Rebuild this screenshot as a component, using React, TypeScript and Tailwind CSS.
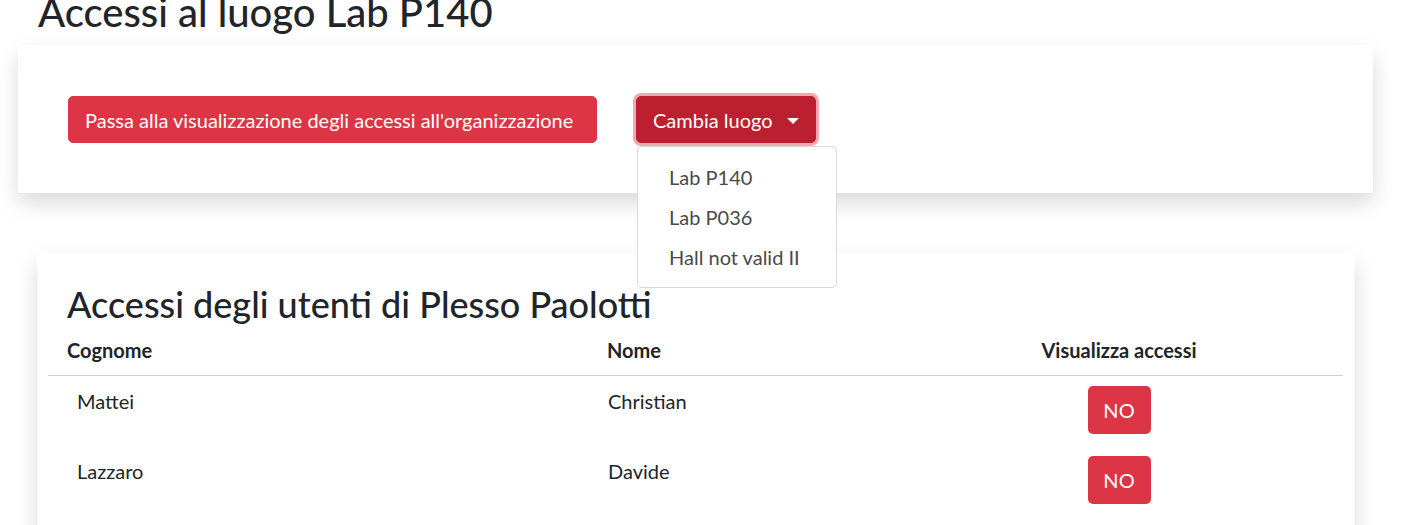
import React, { useState } from 'react';

type Utente = {
  id: number;
  cognome: string;
  nome: string;
};

const luoghi = ['Lab P140', 'Lab P036', 'Hall not valid II'];

const utenti: Utente[] = [
  { id: 1, cognome: 'Mattei', nome: 'Christian' },
  { id: 2, cognome: 'Lazzaro', nome: 'Davide' },
];

export default function App() {
  const [menuOpen, setMenuOpen] = useState(true);

  return (
    <div className="min-h-screen overflow-hidden bg-white font-['Lato','Liberation_Sans',sans-serif] text-[#212529]">
      <h1 className="ml-[38px] -mt-[12px] mb-[9px] text-[40px] leading-[48px] font-medium">
        Accessi al luogo Lab P140
      </h1>

      <div className="ml-[18px] w-[1355px] bg-white px-[50px] pt-[51px] pb-[50px] shadow-[0_10px_20px_rgba(0,0,0,0.15)]">
        <div className="flex items-start gap-[39px]">
          <button className="h-[47px] w-[529px] rounded-[5px] border border-[#dc3545] bg-[#dc3545] px-[16px] text-left text-[20px] leading-[30px] text-white">
            Passa alla visualizzazione degli accessi all'organizzazione
          </button>

          <div className="relative">
            <button
              onClick={() => setMenuOpen(!menuOpen)}
              className="flex h-[47px] w-[180px] items-center rounded-[5px] border border-[#b81f2f] bg-[#bb1f30] px-[16px] text-[20px] leading-[30px] text-white shadow-[0_0_0_3px_rgba(225,83,97,0.5)]"
            >
              Cambia luogo
              <span className="ml-[14px] mt-[2px] h-0 w-0 border-x-[6px] border-t-[6px] border-x-transparent border-t-white" />
            </button>

            {menuOpen && (
              <div className="absolute left-[1px] top-[50px] z-10 w-[200px] rounded-[5px] border border-[rgba(0,0,0,0.15)] bg-white py-[10px]">
                {luoghi.map((l) => (
                  <div key={l} className="h-[40px] px-[31px] py-[5px] text-[20px] leading-[30px] text-[#4a4a4a]">
                    {l}
                  </div>
                ))}
              </div>
            )}
          </div>
        </div>
      </div>

      <div className="ml-[37px] mt-[60px] w-[1318px] bg-white px-[11px] pt-[30px] pb-[40px] shadow-[0_10px_20px_rgba(0,0,0,0.15)]">
        <h2 className="pl-[19px] text-[36px] leading-[43px] font-medium">
          Accessi degli utenti di Plesso Paolotti
        </h2>

        <table className="w-[1295px] border-collapse text-[20px] leading-[30px]">
          <thead>
            <tr className="border-b border-[#cfcfcf]">
              <th className="w-[540px] pl-[19px] pt-[9px] pb-[10px] text-left font-bold">Cognome</th>
              <th className="w-[307px] pl-[19px] pt-[9px] pb-[10px] text-left font-bold">Nome</th>
              <th className="w-[448px] pt-[9px] pb-[10px] text-center font-bold">Visualizza accessi</th>
            </tr>
          </thead>
          <tbody>
            {utenti.map((u) => (
              <tr key={u.id}>
                <td className="pl-[29px] pt-[10px] pb-[12px] align-top">{u.cognome}</td>
                <td className="pl-[20px] pt-[10px] pb-[12px] align-top">{u.nome}</td>
                <td className="pt-[10px] pb-[12px] text-center align-top">
                  <button className="h-[48px] w-[63px] rounded-[5px] bg-[#dc3545] text-[20px] text-white">
                    NO
                  </button>
                </td>
              </tr>
            ))}
          </tbody>
        </table>
      </div>
    </div>
  );
}
